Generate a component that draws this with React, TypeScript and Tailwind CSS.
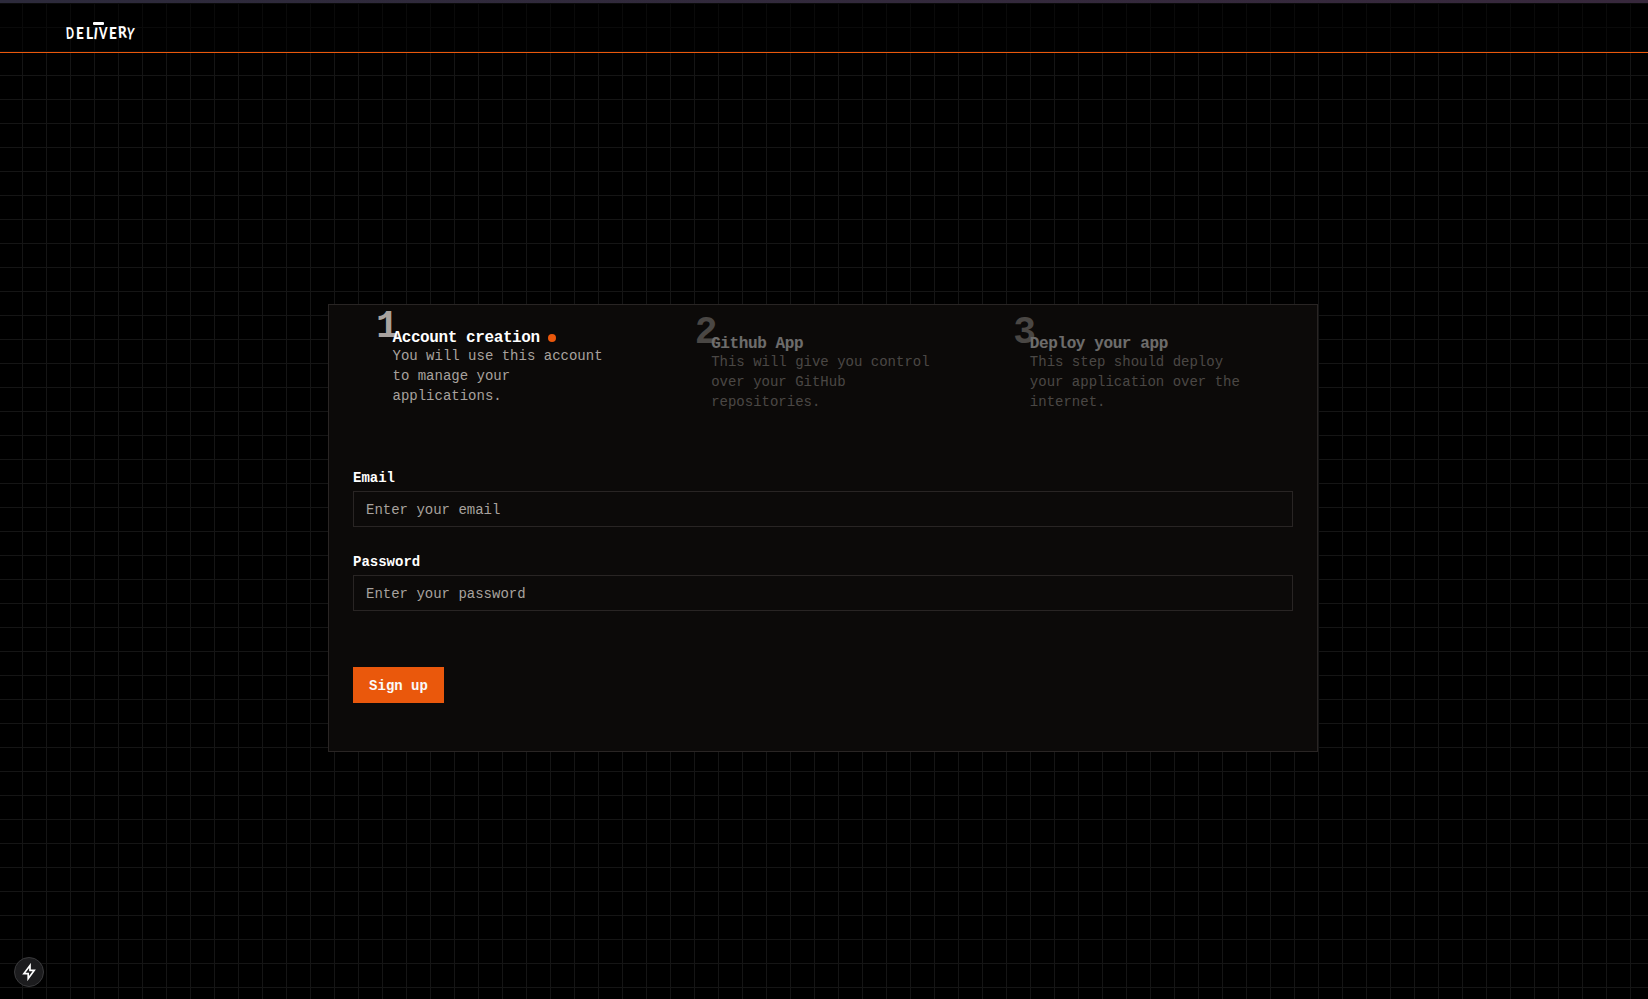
import React from "react";

type Step = { title: string; text: string; active?: boolean };

const steps: Step[] = [
  { title: "Account creation", text: "You will use this account to manage your applications.", active: true },
  { title: "Github App", text: "This will give you control over your GitHub repositories." },
  { title: "Deploy your app", text: "This step should deploy your application over the internet." },
];

function Logo() {
  return (
    <div className="flex w-[70px] flex-col items-start">
      <span className="ml-[27px] h-[3px] w-[11px] rounded-[1px] bg-white" />
      <span className="mt-px flex h-[13px] items-center font-['Lato',sans-serif] text-[16px] leading-[13px] font-black text-white">
        <span className="w-[10px] origin-left -rotate-3 scale-x-[0.66]">D</span>
        <span className="w-[10px] origin-left scale-x-[0.85]">E</span>
        <span className="w-[8px] origin-left scale-x-[0.85]">L</span>
        <span className="w-[5px] origin-left rotate-6 scale-x-[0.8]">I</span>
        <span className="w-[10px] origin-left scale-x-[0.75]">V</span>
        <span className="w-[9px] origin-left scale-x-[0.85]">E</span>
        <span className="w-[9px] origin-left -translate-y-px -rotate-3 scale-x-[0.85]">R</span>
        <span className="w-[8px] origin-left rotate-6 scale-x-[0.7]">Y</span>
      </span>
    </div>
  );
}

function StepItem({ step, index }: { step: Step; index: number }) {
  return (
    <li className={step.active ? "relative pr-10 pl-[39.5px]" : "relative pt-[6px] pr-10 pl-[39.5px] opacity-40"}>
      <span
        className={
          step.active
            ? "absolute top-[-22px] left-[23px] text-[38px] leading-[40px] font-bold text-[#a8a29e]"
            : "absolute top-[-16px] left-[23px] text-[38px] leading-[40px] font-bold text-[#a8a29e]"
        }
      >
        {index}
      </span>
      <h3 className="relative flex h-[17px] items-center gap-[8.5px] text-base leading-4 font-bold tracking-[-0.4px] whitespace-nowrap text-white">
        {step.title}
        {step.active && <span className="h-2 w-2 rounded-full bg-[#ea580c]" />}
      </h3>
      <p className="text-sm leading-5 text-[#a8a29e]">{step.text}</p>
    </li>
  );
}

function Field({ label, type, placeholder }: { label: string; type: string; placeholder: string }) {
  return (
    <div className="flex flex-col gap-[6px]">
      <label className="pt-[2px] text-sm leading-[14px] font-bold text-white">{label}</label>
      <input
        type={type}
        placeholder={placeholder}
        className="h-9 w-full border border-[#292524] bg-transparent px-3 pt-[5px] pb-[3px] text-sm text-white outline-none placeholder:text-[#a8a29e]"
      />
    </div>
  );
}

export default function App() {
  return (
    <div className="relative flex h-[999px] w-full flex-col overflow-hidden bg-black bg-[linear-gradient(to_right,#151515_1px,transparent_1px),linear-gradient(to_bottom,#151515_1px,transparent_1px)] bg-[size:24px_24px] bg-[position:22px_3px] font-['Liberation_Mono',monospace]">
      <div className="h-[3px] shrink-0 bg-linear-to-r from-[#2c2a3b] to-[#37283c]" />
      <header className="flex h-[50px] shrink-0 border-b border-[#ea580c] bg-black/50 pt-[19px] pl-[66px]">
        <Logo />
      </header>
      <main className="flex justify-center pt-[251px] pr-[2px]">
        <section className="h-[448px] w-[990px] border border-[#292524] bg-[#0c0a09] p-6">
          <ol className="grid h-[136px] grid-cols-3 gap-4">
            {steps.map((step, i) => (
              <StepItem key={step.title} step={step} index={i + 1} />
            ))}
          </ol>
          <form className="flex flex-col" onSubmit={(e) => e.preventDefault()}>
            <div className="flex flex-col gap-[26px] pt-1">
              <Field label="Email" type="email" placeholder="Enter your email" />
              <Field label="Password" type="password" placeholder="Enter your password" />
            </div>
            <button className="mt-14 h-9 w-[91px] bg-[#ea580c] pt-[2px] text-sm font-bold text-[#fafaf9]">Sign up</button>
          </form>
        </section>
      </main>
      <button
        aria-label="Static route"
        className="absolute bottom-[12px] left-[14px] flex h-[30px] w-[30px] items-center justify-center rounded-full border border-[#3a3a3c] bg-[#1c1c1e]"
      >
        <svg width="16" height="18" viewBox="0 0 16 18" fill="none" stroke="#fff" strokeWidth="1.7" strokeLinejoin="miter">
          <path d="M9 2.4 L2.9 10.6 H7.2 V15.6 L13.2 7.4 H9 Z" />
        </svg>
      </button>
    </div>
  );
}
